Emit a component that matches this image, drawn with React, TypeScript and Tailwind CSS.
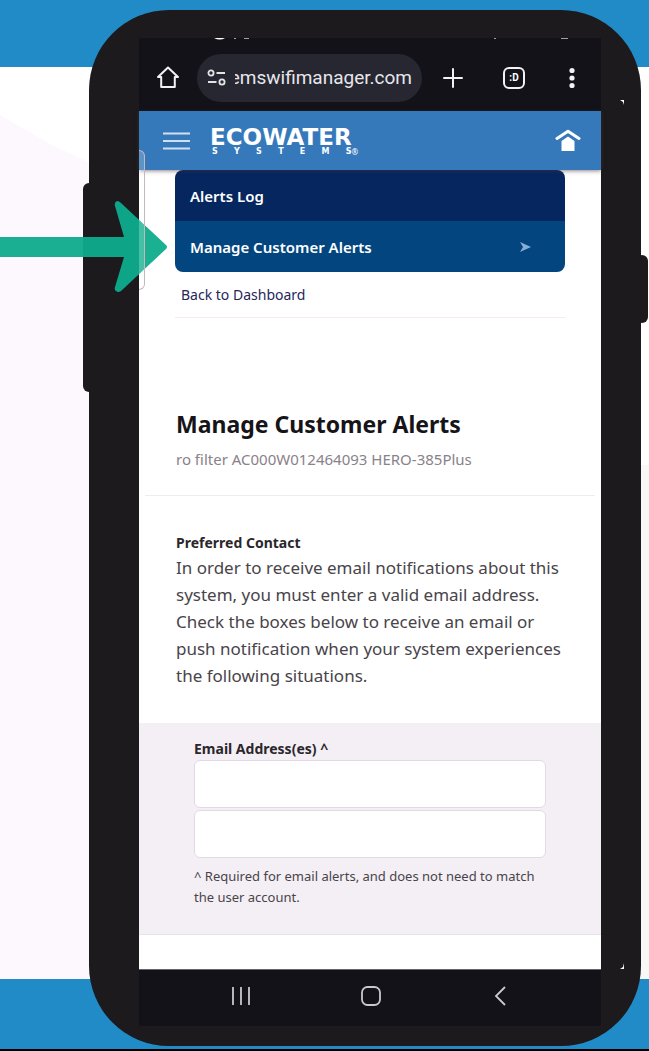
import { useState } from "react";

const navItems = [
  { label: "Alerts Log", active: false },
  { label: "Manage Customer Alerts", active: true },
];

function Backdrop() {
  return (
    <div className="absolute inset-0 flex flex-col" aria-hidden="true">
      <div className="h-[67px] bg-[#218bc8]" />
      <div className="relative flex-1 bg-white overflow-hidden">
        <svg className="absolute left-0 top-0 w-[180px] h-full" viewBox="0 0 180 912" preserveAspectRatio="none">
          <path d="M0 48L52 78L88 95L180 140V912H0Z" fill="#fcf8fd" />
        </svg>
        <div className="absolute right-0 top-[398px] bottom-0 w-4 bg-[#f9f8f9]" />
      </div>
      <div className="h-[70px] bg-[#218bc8]" />
      <div className="h-[2px] bg-black" />
    </div>
  );
}

function Arrow() {
  return (
    <svg className="absolute left-0 top-[200px] opacity-95" width="170" height="94" viewBox="0 0 170 94" fill="#0eac8d" aria-hidden="true">
      <path d="M0 37H124L115 6Q114 2 117 1Q119 1 121 3L166 45Q168 47 166 49L121 91Q118 93 116 91Q114 90 115 87L124 57H0Z" />
    </svg>
  );
}

function BrowserBar() {
  return (
    <div className="relative flex items-center h-[73px] pt-[6px] pl-[17px] pr-[23px] bg-[#121218] text-white">
      <svg className="absolute left-0 top-0" width="462" height="3" viewBox="0 0 462 3" fill="#fff" aria-hidden="true">
        <path d="M75 0H86Q81 3 75 0Z" />
        <path d="M95 0h2v1h-2zM105 0h5v1h-5zM355 0h2v1h-2zM422 0h7v1h-7z" opacity=".6" />
      </svg>
      <button aria-label="Home" className="shrink-0">
        <svg width="24" height="24" viewBox="0 0 24 24" fill="none" stroke="#f2f2f5" strokeWidth="2" strokeLinejoin="round" strokeLinecap="round">
          <path d="M2 11L12 1.500L22 11H18.800V21H5.200V11Z" />
        </svg>
      </button>
      <div className="flex items-center flex-1 min-w-0 h-12 ml-[17px] mr-5 pl-[10px] pr-[10px] rounded-full bg-[#262730]">
        <svg className="shrink-0" width="20" height="18" viewBox="0 0 20 18" fill="none" stroke="#e4e4e8" strokeWidth="1.800" aria-hidden="true">
          <circle cx="4" cy="4" r="2.600" />
          <path d="M9.500 4H18M1 13H9.500" />
          <circle cx="15" cy="13" r="2.600" />
        </svg>
        <div className="flex justify-end flex-1 min-w-0 ml-2 overflow-hidden">
          <span className="font-[Roboto,sans-serif] text-[19px] leading-6 text-[#e6e6ec]">emswifimanager.com</span>
        </div>
      </div>
      <div className="flex items-center shrink-0">
        <button aria-label="New tab">
          <svg width="22" height="22" viewBox="0 0 22 22" stroke="#f2f2f5" strokeWidth="2" strokeLinecap="round">
            <path d="M11 2V20M2 11H20" />
          </svg>
        </button>
        <button aria-label="Tabs" className="flex items-center justify-center w-[22px] h-[22px] ml-[39px] rounded-md border-2 border-[#f2f2f5] font-[Roboto,sans-serif] font-bold text-[10px] leading-none">
          :D
        </button>
        <button aria-label="More" className="ml-[41px]">
          <svg width="12" height="22" viewBox="0 0 12 22" fill="#f2f2f5">
            <circle cx="6" cy="3.500" r="2.600" />
            <circle cx="6" cy="11" r="2.600" />
            <circle cx="6" cy="18.500" r="2.600" />
          </svg>
        </button>
      </div>
    </div>
  );
}

function SiteHeader() {
  return (
    <header className="relative z-10 flex items-center h-[59px] pl-6 pr-5 bg-[#3679bb] text-white shadow-[0_1px_4px_rgba(70,50,60,0.6)]">
      <button aria-label="Menu">
        <svg width="27" height="18" viewBox="0 0 27 18" stroke="#cfe0f2" strokeWidth="2">
          <path d="M0 1.500H27M0 9H27M0 16.500H27" />
        </svg>
      </button>
      <a href="#" className="block ml-5 font-['DejaVu_Sans',sans-serif] font-bold">
        <span className="block text-[23px] leading-[22px]">ECOWATER</span>
        <span className="flex justify-between pl-[2px] text-[8px] leading-2">
          {"SYSTEMS".split("").map((c, i) => (
            <span key={i}>{c}</span>
          ))}
        </span>
      </a>
      <span className="self-end mb-[14px] text-[8px] leading-2">®</span>
      <a href="#" aria-label="Dashboard" className="ml-auto">
        <svg width="26" height="23" viewBox="0 0 26 23" fill="#fff">
          <path d="M2 9.500L13 2.200L24 9.500" fill="none" stroke="#fff" strokeWidth="3" strokeLinejoin="round" strokeLinecap="round" />
          <path d="M13 7.500L19.500 12V22H6.500V12Z" />
        </svg>
      </a>
    </header>
  );
}

export default function App() {
  const [emails, setEmails] = useState(["", ""]);

  const setEmail = (index: number, value: string) => {
    setEmails((list) => list.map((e, i) => (i === index ? value : e)));
  };

  return (
    <div className="relative overflow-hidden pt-[10px] pr-2 pb-[5px] pl-[89px] font-['Noto_Sans',sans-serif]">
      <Backdrop />
      <div className="relative rounded-[80px] bg-[#1c1a1c] pt-7 pr-10 pb-5 pl-[50px]">
        <div className="absolute -left-[6px] top-[173px] w-3 h-[209px] rounded-md bg-[#1c1a1c]" />
        <div className="absolute -right-[7px] top-[245px] w-3 h-[68px] rounded-md bg-[#1c1a1c]" />
        <svg className="absolute right-[17px] top-[90px]" width="4" height="6" viewBox="0 0 4 6" fill="#fff" aria-hidden="true">
          <path d="M0 0H4V5L3 2Z" />
        </svg>
        <svg className="absolute right-[17px] bottom-[77px]" width="4" height="6" viewBox="0 0 4 6" fill="#fff" aria-hidden="true">
          <path d="M4 0V6H0L3 4Z" />
        </svg>

        <div className="relative bg-white">
          <BrowserBar />
          <SiteHeader />
          <div className="absolute z-20 left-0 top-[112px] w-[6px] h-[140px] rounded-r-md border border-l-0 border-[#c4b8c2] bg-white/20" />

          <nav className="px-9">
            <ul className="overflow-hidden rounded-lg text-[15px] font-semibold text-white">
              {navItems.map((item) => (
                <li key={item.label}>
                  <a
                    href="#"
                    className={
                      "flex items-center justify-between h-[51px] pt-px pl-[15px] pr-[34px] " +
                      (item.active ? "bg-[#03467f]" : "bg-[#05265e]")
                    }
                  >
                    {item.label}
                    {item.active && (
                      <svg width="11" height="10" viewBox="0 0 11 10" fill="#86add6" aria-hidden="true">
                        <path d="M0 0L11 5L0 10L3 5Z" />
                      </svg>
                    )}
                  </a>
                </li>
              ))}
            </ul>
            <div className="h-[46px] border-b border-[#f5eaf2] pl-[6px] text-sm leading-[46px] text-[#26265a]">
              <a href="#">Back to Dashboard</a>
            </div>
          </nav>

          <div className="mx-[6px] border-b border-[#f0ebf1] px-[31px] pt-[88px] pb-6">
            <h1 className="text-[23px] leading-9 font-bold text-[#161418]">Manage Customer Alerts</h1>
            <p className="mt-[5px] text-[15px] leading-6 text-[#89828a]">ro filter AC000W012464093 HERO-385Plus</p>
          </div>

          <section className="pl-[37px] pr-8 pt-9 pb-[34px]">
            <h2 className="text-sm leading-[22px] font-bold text-[#2a272c]">Preferred Contact</h2>
            <p className="text-[17px] leading-[27px] text-[#48444a]">
              In order to receive email notifications about this system, you must enter a valid email address. Check the
              boxes below to receive an email or push notification when your system experiences the following situations.
            </p>
          </section>

          <form className="h-[212px] border-b border-[#e8e2ea] bg-[#f4eff5] px-[55px] pt-[14px]">
            <label htmlFor="email-1" className="block text-sm leading-[23px] font-bold text-[#2a272c]">
              Email Address(es) ^
            </label>
            <div className="flex flex-col gap-[2px]">
              {emails.map((email, i) => (
                <input
                  key={i}
                  id={"email-" + (i + 1)}
                  aria-label={"Email address " + (i + 1)}
                  type="email"
                  value={email}
                  onChange={(e) => setEmail(i, e.target.value)}
                  className="w-full h-12 rounded-md border border-[#e3d9e6] bg-white px-3 text-base"
                />
              ))}
            </div>
            <p className="mt-2 text-[13px] leading-[21px] text-[#48444a]">
              ^ Required for email alerts, and does not need to match the user account.
            </p>
          </form>
          <div className="h-[34px]" />

          <div className="flex items-center justify-between h-[57px] border-t border-[#66646b] bg-[#121218] pl-[92px] pr-[91px] pb-1">
            <button aria-label="Recent apps">
              <svg width="20" height="20" viewBox="0 0 20 20" stroke="#c9c8ce" strokeWidth="1.800">
                <path d="M2 1V19M10 1V19M18 1V19" />
              </svg>
            </button>
            <button aria-label="Home screen">
              <svg width="20" height="20" viewBox="0 0 20 20" fill="none" stroke="#c9c8ce" strokeWidth="1.800">
                <rect x="1" y="1" width="18" height="18" rx="5.500" />
              </svg>
            </button>
            <button aria-label="Back">
              <svg width="20" height="20" viewBox="0 0 20 20" fill="none" stroke="#c9c8ce" strokeWidth="1.800">
                <path d="M15 1L6 10L15 19" />
              </svg>
            </button>
          </div>
        </div>
      </div>
      <Arrow />
    </div>
  );
}
